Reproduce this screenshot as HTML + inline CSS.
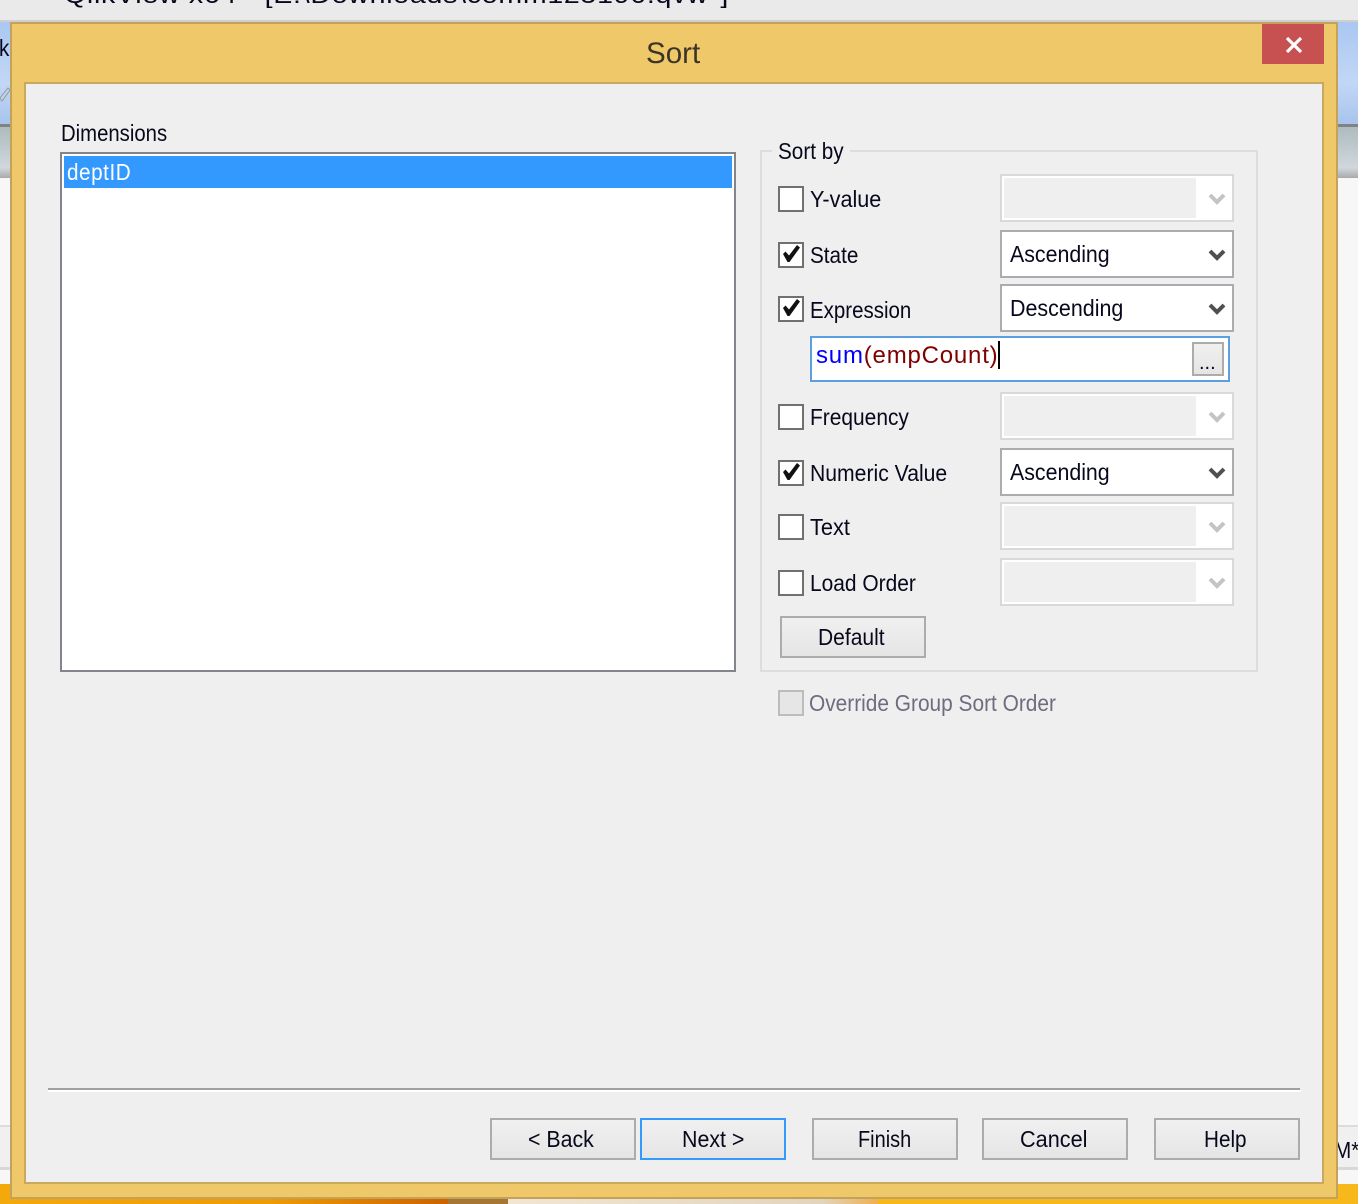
<!DOCTYPE html>
<html><head><meta charset="utf-8">
<style>
html,body{margin:0;padding:0;background:#fff}
#p{position:relative;width:1358px;height:1204px;overflow:hidden;background:#f7f7f7;font-family:"Liberation Sans",sans-serif;color:#000}
#p div,#p span.a{position:absolute;box-sizing:border-box}
.t{position:absolute;font-size:23px;line-height:28px;white-space:nowrap;transform-origin:0 50%;transform:scaleX(.9);color:#08081c}
.cb{width:26px;height:26px;left:778px;border:2px solid #707070;background:#fff}
.cb svg{position:absolute;left:0;top:0}
.c{left:1000px;width:234px;height:48px;border:2px solid #acacb0;background:#fff}
.d{border-color:#d9d9d9}
.d i{position:absolute;left:2px;top:2px;width:192px;height:40px;background:#efefef}
.c svg{position:absolute;left:206px;top:17px}
.b{height:42px;top:1118px;border:2px solid #acacac;background:linear-gradient(#f0f0f0,#e5e5e5)}
.bt{top:1125px}
</style></head><body>
<div id="p">
<div style="left:0;top:0;width:1358px;height:21px;background:#eaeaea"></div>
<div style="left:0;top:20px;width:1358px;height:2px;background:#cfcfcf"></div>
<span class="t" style="left:64px;top:-18px;font-size:24px;letter-spacing:.6px;transform:scaleX(1.19)">QlikView x64 - [E:\Downloads\comm125190.qvw*]</span>
<div style="left:0;top:22px;width:1358px;height:102px;background:linear-gradient(#a9c7f2,#c2d7f6 60%,#a8c4ec)"></div>
<div style="left:0;top:124px;width:1358px;height:3px;background:#7f8286"></div>
<div style="left:0;top:127px;width:1358px;height:51px;background:linear-gradient(#aebbbd,#d0d7de 80%,#a9a9a9)"></div>
<span class="t" style="left:-1px;top:34px">k</span>
<svg style="position:absolute;left:0;top:84px" width="10" height="24"><path d="M0 14L8 4l2 2-8 11z" fill="#c9d3e2" stroke="#8d99aa"/></svg>
<div style="left:0;top:1125px;width:1358px;height:2px;background:#dcdcdc"></div>
<div style="left:0;top:1127px;width:1358px;height:40px;background:#f0f0f0"></div>
<div style="left:0;top:1167px;width:1358px;height:3px;background:#d8d8d8"></div>
<span class="t" style="left:1334px;top:1136px">M*</span>
<div style="left:0;top:1184px;width:450px;height:20px;background:linear-gradient(90deg,#f3a80c,#ee9b05 60%,#cc6200)"></div>
<div style="left:448px;top:1184px;width:60px;height:20px;background:#a67634"></div>
<div style="left:508px;top:1184px;width:370px;height:20px;background:linear-gradient(90deg,#f2e6d2,#e2d4bd 85%,#f0b050)"></div>
<div style="left:878px;top:1184px;width:480px;height:20px;background:#f7b81c"></div>

<!-- window -->
<div style="left:10px;top:22px;width:1328px;height:1177px;background:#efc86a;border:2px solid #c3a35c"></div>
<div style="left:24px;top:82px;width:1300px;height:1102px;background:#efefef;border:2px solid #c9a95e"></div>
<span class="t" style="left:646px;top:38px;font-size:30px;line-height:32px;color:#3b3526;transform:scaleX(.985)">Sort</span>
<div style="left:1262px;top:24px;width:62px;height:40px;background:#c75050"></div>
<svg style="position:absolute;left:1285px;top:37px" width="18" height="16"><path d="M2 1l14 14M16 1L2 15" stroke="#fff" stroke-width="3.2"/></svg>

<span class="t" style="left:61px;top:119px;transform:scaleX(.883)">Dimensions</span>
<div style="left:60px;top:152px;width:676px;height:520px;background:#fff;border:2px solid #82868c"></div>
<div style="left:64px;top:156px;width:668px;height:32px;background:#3399ff"></div>
<span class="t" style="left:67px;top:158px;color:#fff;letter-spacing:.6px">deptID</span>

<!-- group -->
<div style="left:760px;top:150px;width:498px;height:522px;border:2px solid #dddddd"></div>
<div style="left:772px;top:140px;width:78px;height:20px;background:#efefef"></div>
<span class="t" style="left:778px;top:137px">Sort by</span>

<div class="cb" style="top:186px"></div><span class="t" style="left:810px;top:185px;transform:scaleX(.94)">Y-value</span>
<div class="c d" style="top:174px"><i></i><svg width="18" height="14"><path d="M2 2l7 7 7-7" fill="none" stroke="#c4c4c4" stroke-width="4"/></svg></div>

<div class="cb" style="top:242px"><svg width="22" height="22"><path d="M3 10l2.500-2.500 3.500 4L17 1l3 2.500L9.500 18h-2z" fill="#111"/></svg></div><span class="t" style="left:810px;top:241px">State</span>
<div class="c" style="top:230px"></div><span class="t" style="left:1010px;top:240px;transform:scaleX(.928)">Ascending</span>
<svg style="position:absolute;left:1208px;top:249px" width="18" height="14"><path d="M2 2l7 7 7-7" fill="none" stroke="#505050" stroke-width="4"/></svg>

<div class="cb" style="top:296px"><svg width="22" height="22"><path d="M3 10l2.500-2.500 3.500 4L17 1l3 2.500L9.500 18h-2z" fill="#111"/></svg></div><span class="t" style="left:810px;top:296px;transform:scaleX(.89)">Expression</span>
<div class="c" style="top:284px"></div><span class="t" style="left:1010px;top:294px;transform:scaleX(.933)">Descending</span>
<svg style="position:absolute;left:1208px;top:303px" width="18" height="14"><path d="M2 2l7 7 7-7" fill="none" stroke="#505050" stroke-width="4"/></svg>

<div style="left:810px;top:336px;width:420px;height:46px;background:#fff;border:2px solid #5b9fe3"></div>
<span class="t" style="left:816px;top:342px;font-size:24px;color:#800000;transform:none;letter-spacing:.8px"><span style="color:#0000ff">sum</span>(empCount)</span>
<div style="left:998px;top:341px;width:2px;height:28px;background:#000"></div>
<div style="left:1192px;top:342px;width:32px;height:34px;border:2px solid #acacac;background:linear-gradient(#f0f0f0,#e5e5e5)"></div>
<span class="t" style="left:1199px;top:349px;font-size:20px;transform:none">...</span>

<div class="cb" style="top:404px"></div><span class="t" style="left:810px;top:403px;transform:scaleX(.91)">Frequency</span>
<div class="c d" style="top:392px"><i></i><svg width="18" height="14"><path d="M2 2l7 7 7-7" fill="none" stroke="#c4c4c4" stroke-width="4"/></svg></div>

<div class="cb" style="top:460px"><svg width="22" height="22"><path d="M3 10l2.500-2.500 3.500 4L17 1l3 2.500L9.500 18h-2z" fill="#111"/></svg></div><span class="t" style="left:810px;top:459px;transform:scaleX(.92)">Numeric Value</span>
<div class="c" style="top:448px"></div><span class="t" style="left:1010px;top:458px;transform:scaleX(.928)">Ascending</span>
<svg style="position:absolute;left:1208px;top:467px" width="18" height="14"><path d="M2 2l7 7 7-7" fill="none" stroke="#505050" stroke-width="4"/></svg>

<div class="cb" style="top:514px"></div><span class="t" style="left:810px;top:513px;transform:scaleX(.947)">Text</span>
<div class="c d" style="top:502px"><i></i><svg width="18" height="14"><path d="M2 2l7 7 7-7" fill="none" stroke="#c4c4c4" stroke-width="4"/></svg></div>

<div class="cb" style="top:570px"></div><span class="t" style="left:810px;top:569px;transform:scaleX(.91)">Load Order</span>
<div class="c d" style="top:558px"><i></i><svg width="18" height="14"><path d="M2 2l7 7 7-7" fill="none" stroke="#c4c4c4" stroke-width="4"/></svg></div>

<div class="b" style="left:780px;top:616px;width:146px"></div><span class="t" style="left:818px;top:623px;transform:scaleX(.914)">Default</span>

<div class="cb" style="top:690px;background:#e6e6e6;border-color:#bcbcbc"></div>
<span class="t" style="left:809px;top:689px;color:#6d6d80;transform:scaleX(.907)">Override Group Sort Order</span>

<div style="left:48px;top:1088px;width:1252px;height:2px;background:#a0a0a0"></div>
<div style="left:48px;top:1090px;width:1253px;height:2px;background:#fff"></div>

<div class="b" style="left:490px;width:146px"></div><span class="t bt" style="left:528px;transform:scaleX(.928)">&lt; Back</span>
<div class="b" style="left:640px;width:146px;border-color:#3399ff"></div><span class="t bt" style="left:682px;transform:scaleX(.93)">Next &gt;</span>
<div class="b" style="left:812px;width:146px"></div><span class="t bt" style="left:858px;transform:scaleX(.867)">Finish</span>
<div class="b" style="left:982px;width:146px"></div><span class="t bt" style="left:1020px;transform:scaleX(.942)">Cancel</span>
<div class="b" style="left:1154px;width:146px"></div><span class="t bt" style="left:1204px">Help</span>
</div>
</body></html>
